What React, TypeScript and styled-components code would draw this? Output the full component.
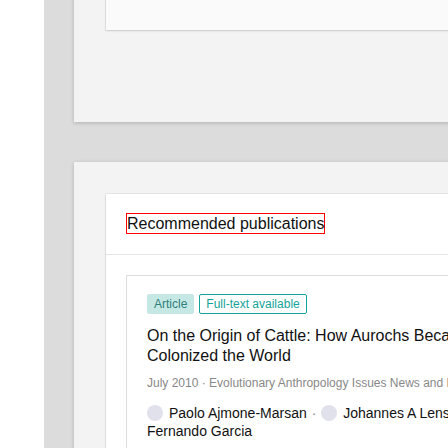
import React from "react";
import styled, { createGlobalStyle } from "styled-components";

const Global = createGlobalStyle`
  html, body { margin: 0; padding: 0; background: #ffffff; overflow: hidden; }
  body { font-family: "Liberation Sans", Arial, sans-serif; color: #111111; }
`;

const Page = styled.div`
  display: flex;
  width: max-content;
  min-height: 448px;
`;

const Sidebar = styled.div`
  width: 44px;
  flex: none;
  background: #ffffff;
`;

const Main = styled.div`
  background: #dcdcdc;
  padding: 0 30px 40px;
  margin-top: -60px;
  display: flex;
  flex-direction: column;
  gap: 40px;
`;

const Panel = styled.section<{ $bottom?: number }>`
  width: 502px;
  background: #f3f3f3;
  padding: 32px 32px ${(p) => p.$bottom ?? 32}px;
  box-shadow: 0 1px 4px rgba(0, 0, 0, 0.2);
`;

const Card = styled.div<{ $tone?: string; $height?: number }>`
  background: ${(p) => p.$tone ?? "#ffffff"};
  ${(p) => (p.$height ? `height: ${p.$height}px;` : "")}
  box-shadow: 0 0 0 1px rgba(0, 0, 0, 0.05), 0 1px 2px rgba(0, 0, 0, 0.12);
`;

const CardHeader = styled.div`
  padding: 19px 20px 20px;
  border-bottom: 1px solid #e6e6e6;
`;

const HeaderTitle = styled.h2`
  display: inline-block;
  margin: 0;
  font-size: 16px;
  font-weight: normal;
  line-height: 19px;
  border: 1px solid #ff0000;
  color: #111111;
`;

const CardBody = styled.div`
  padding: 20px 20px 40px;
`;

const Item = styled.article`
  border: 1px solid #dddddd;
  padding: 18px 20px 24px;
`;

const Tags = styled.div`
  display: flex;
  gap: 5px;
`;

const Tag = styled.span<{ $variant: "filled" | "outline" }>`
  font-size: 12px;
  line-height: 18px;
  padding: 0 6px;
  border-radius: 2px;
  border: 1px solid ${(p) => (p.$variant === "filled" ? "#c6e8e5" : "#14a39a")};
  background: ${(p) => (p.$variant === "filled" ? "#c6e8e5" : "#ffffff")};
  color: ${(p) => (p.$variant === "filled" ? "#2f7f7c" : "#14a39a")};
`;

const Title = styled.div`
  margin-top: 12px;
  font-size: 16px;
  line-height: 20px;
  color: #111111;
`;

const Meta = styled.div`
  margin-top: 9px;
  font-size: 12px;
  line-height: 16px;
  color: #888888;
  white-space: nowrap;
  overflow: hidden;
  text-overflow: ellipsis;
`;

const Authors = styled.div`
  margin-top: 13px;
  font-size: 14px;
  line-height: 18px;
  color: #111111;
`;

const Avatar = styled.span`
  display: inline-block;
  width: 16px;
  height: 16px;
  border-radius: 50%;
  background: #e1e1ec;
  vertical-align: -3px;
  margin-right: 6px;
`;

const Sep = styled.span`
  color: #888888;
  margin: 0 1px;
`;

const authors = ["Paolo Ajmone-Marsan", "Johannes A Lenstra", "José Fernando Garcia"];

export default function App() {
  return (
    <>
      <Global />
      <Page>
        <Sidebar />
        <Main>
          <Panel $bottom={92}>
            <Card $tone="#fafafa" $height={58} />
          </Panel>
          <Panel>
            <Card>
              <CardHeader>
                <HeaderTitle>Recommended publications</HeaderTitle>
              </CardHeader>
              <CardBody>
                <Item>
                  <Tags>
                    <Tag $variant="filled">Article</Tag>
                    <Tag $variant="outline">Full-text available</Tag>
                  </Tags>
                  <Title>On the Origin of Cattle: How Aurochs Became Cattle and Colonized the World</Title>
                  <Meta>July 2010 · Evolutionary Anthropology Issues News and Reviews 19(4):148 - 154</Meta>
                  <Authors>
                    {authors.map((a, i) => (
                      <React.Fragment key={a}>
                        {i > 0 && <Sep> · </Sep>}
                        <Avatar />
                        {a}
                      </React.Fragment>
                    ))}
                  </Authors>
                </Item>
              </CardBody>
            </Card>
          </Panel>
        </Main>
      </Page>
    </>
  );
}
